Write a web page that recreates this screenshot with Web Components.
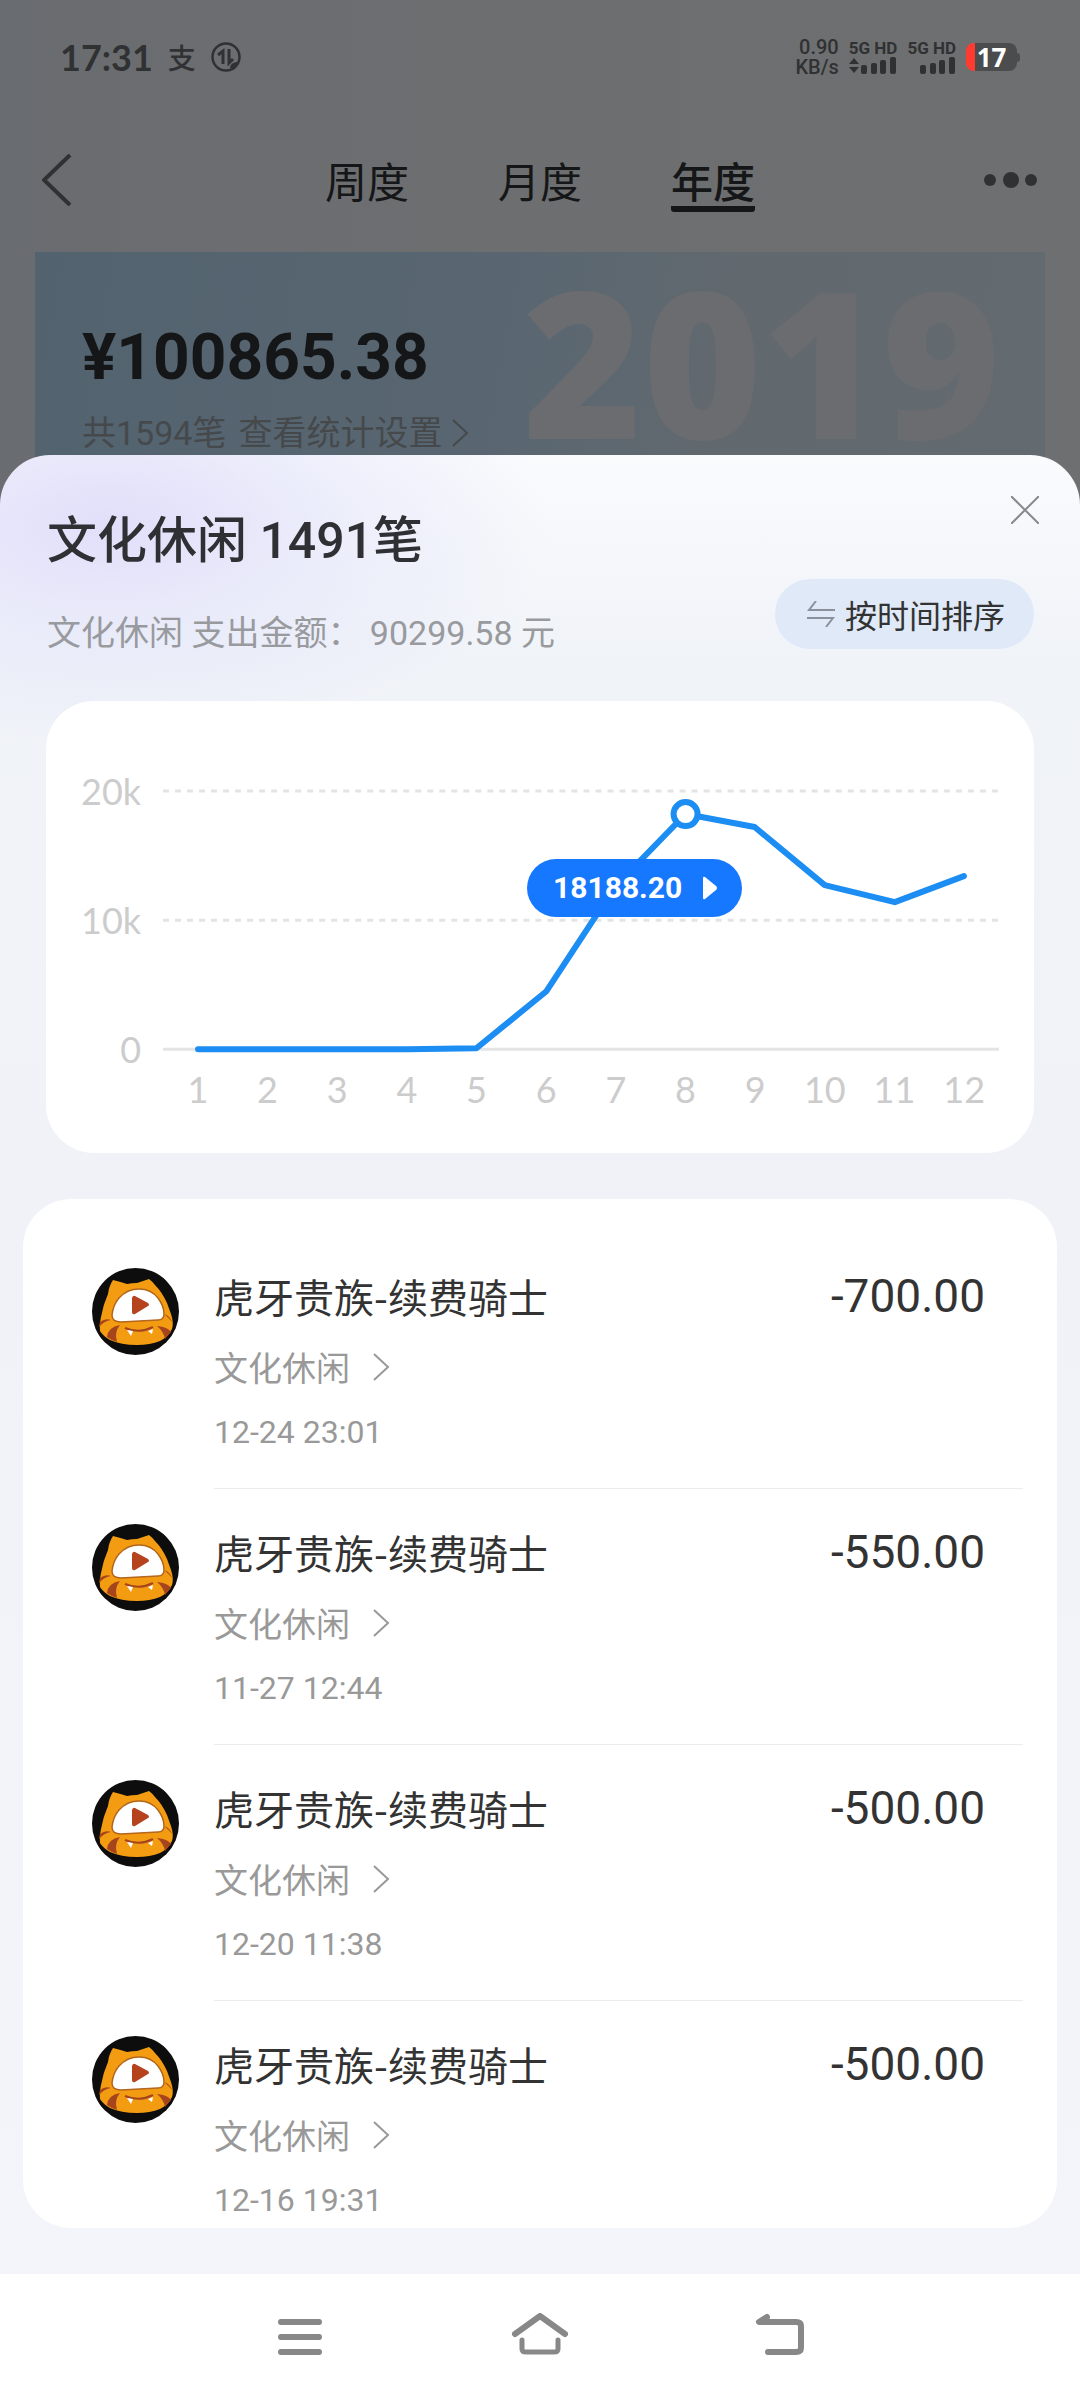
<!DOCTYPE html>
<html lang="zh-CN">
<head>
<meta charset="utf-8">
<meta name="viewport" content="width=device-width, initial-scale=1">
<title>文化休闲 年度账单</title>
<style>
  :root {
    --text: #333;
    --muted: #999;
    --faint: #ccc;
    --accent: #1677ff;
    --line: #1c8df2;
    --digits: Roboto, "Noto Sans CJK SC", sans-serif;
    --axis: Lato, "Noto Sans CJK SC", sans-serif;
  }

  body {
    margin: 0;
    font-family: "Noto Sans CJK SC", sans-serif;
    color: var(--text);
    background: #fff;
  }
</style>
</head>
<body>
<bill-app></bill-app>

<script>
const RECORDS = [
  { title: '虎牙贵族-续费骑士', category: '文化休闲', date: '12-24 23:01', amount: '-700.00' },
  { title: '虎牙贵族-续费骑士', category: '文化休闲', date: '11-27 12:44', amount: '-550.00' },
  { title: '虎牙贵族-续费骑士', category: '文化休闲', date: '12-20 11:38', amount: '-500.00' },
  { title: '虎牙贵族-续费骑士', category: '文化休闲', date: '12-16 19:31', amount: '-500.00' }
];

const MONTHS = [30, 30, 0, 30, 70, 4470, 12600, 18188.2, 17200, 12740, 11420, 13400];

const RESET = `
  * { box-sizing: border-box; }
  button {
    margin: 0;
    padding: 0;
    border: 0;
    background: none;
    color: inherit;
    font: inherit;
    cursor: pointer;
  }
  a { color: inherit; text-decoration: none; }
  svg { display: block; flex: none; }
`;

class StatusBar extends HTMLElement {
  constructor() {
    super();
    this.attachShadow({ mode: 'open' });
  }

  connectedCallback() {
    const bars = `
      <rect x="0" y="8" width="6" height="9" rx="2"/>
      <rect x="10" y="6" width="6" height="11" rx="2"/>
      <rect x="19" y="3" width="6" height="14" rx="2"/>
      <rect x="29" y="0" width="6" height="17" rx="2"/>`;

    this.shadowRoot.innerHTML = `
      <style>
        ${RESET}
        :host {
          display: flex;
          align-items: center;
          justify-content: space-between;
          height: 114px;
          padding: 0 60px;
          color: #303133;
        }
        .side { display: flex; align-items: center; }
        .left { gap: 15px; }
        .right { gap: 10px; }
        time { font: 700 36px/44px var(--axis); }
        .pay { font-size: 28px; line-height: 40px; font-weight: 500; }
        .speed { font: 500 20px/20px var(--digits); text-align: right; }
        .speed span { display: block; }
        .sim { display: flex; flex-direction: column; align-items: flex-end; gap: 1px; font: 700 17px/16px Roboto, sans-serif; }
        .sim svg { fill: currentColor; }
        .battery {
          display: flex;
          align-items: center;
          justify-content: center;
          width: 51px;
          height: 28px;
          border-radius: 8px;
          background: linear-gradient(90deg, #ff3b30 9px, #4b4c4d 9px);
          color: #fff;
          font: 700 26px/28px "Open Sans", sans-serif;
        }
        .cell { display: flex; align-items: center; }
        .cell::after { content: ''; width: 3px; height: 9px; border-radius: 0 3px 3px 0; background: #4b4c4d; }
      </style>
      <div class="side left">
        <time>17:31</time>
        <span class="pay">支</span>
        <svg width="30" height="30" viewBox="0 0 30 30" fill="none" stroke="currentColor">
          <circle cx="15" cy="15" r="13.5" stroke-width="2.5"/>
          <path d="M7 13l5-4v13M18 7v14l4-4" stroke-width="3"/>
          <path d="M19 26c0-4 4-6 8-6-1 4-4 7-8 6z" fill="currentColor" stroke="none"/>
        </svg>
      </div>
      <div class="side right">
        <div class="speed"><span>0.90</span><span>KB/s</span></div>
        <div class="sim"><span>5G HD</span>
          <svg width="48" height="17" viewBox="-12 0 48 17"><path d="M-12 7l5-6 5 6zM-12 10h10l-5 6z"/>${bars}</svg>
        </div>
        <div class="sim"><span>5G HD</span>
          <svg width="36" height="17" viewBox="0 0 36 17">${bars}</svg>
        </div>
        <div class="cell"><span class="battery">17</span></div>
      </div>
    `;
  }
}

class ReportNav extends HTMLElement {
  constructor() {
    super();
    this.attachShadow({ mode: 'open' });
  }

  connectedCallback() {
    this.shadowRoot.innerHTML = `
      <style>
        ${RESET}
        :host {
          display: grid;
          grid-template-columns: 1fr auto 1fr;
          align-items: center;
          height: 138px;
          padding: 0 42px;
          color: #151617;
        }
        nav { display: flex; gap: 89px; }
        nav button { font-size: 42px; line-height: 52px; padding-bottom: 6px; }
        nav button[aria-current] {
          font-weight: 500;
          background: linear-gradient(#151617, #151617) bottom / 100% 6px no-repeat;
          border-radius: 3px;
        }
        .back, .more { color: #303133; padding-bottom: 6px; }
        .back { justify-self: start; }
        .more { justify-self: end; }
      </style>
      <button class="back" aria-label="返回">
        <svg width="32" height="52" viewBox="2 0 32 52" fill="none" stroke="currentColor" stroke-width="4"><path d="M30 1L4 26l26 25"/></svg>
      </button>
      <nav>
        <button>周度</button>
        <button>月度</button>
        <button aria-current="page">年度</button>
      </nav>
      <button class="more" aria-label="更多">
        <svg width="54" height="16" viewBox="0 0 54 16" fill="currentColor"><circle cx="6" cy="8" r="6"/><circle cx="27" cy="8" r="8"/><circle cx="47" cy="8" r="6"/></svg>
      </button>
    `;
  }
}

class YearCard extends HTMLElement {
  constructor() {
    super();
    this.attachShadow({ mode: 'open' });
  }

  connectedCallback() {
    this.shadowRoot.innerHTML = `
      <style>
        ${RESET}
        :host {
          display: block;
          position: relative;
          height: 300px;
          margin: 0 35px;
          padding: 60px 47px 0;
          background: linear-gradient(100deg, #52636f, #596671 45%, #61696f 65%, #636a70);
        }
        .year {
          position: absolute;
          top: 8px;
          right: 44px;
          font: 800 204px/200px "Open Sans", sans-serif;
          color: #6a6c70;
        }
        .total {
          position: relative;
          margin: 0;
          font: 700 64px/92px var(--digits);
          color: #151617;
        }
        .count {
          position: relative;
          display: flex;
          align-items: center;
          gap: 12px;
          margin: 0;
          padding-top: 3px;
          font: 34px/52px var(--digits);
          color: #46494b;
        }
        .count a { display: flex; align-items: center; gap: 10px; }
      </style>
      <span class="year">${this.getAttribute('year')}</span>
      <p class="total">${this.getAttribute('total')}</p>
      <p class="count">
        <span>共1594笔</span>
        <a href="#settings">查看统计设置
          <svg width="18" height="28" viewBox="0 0 18 28" fill="none" stroke="currentColor" stroke-width="2"><path d="M1 1l14 13L1 27"/></svg>
        </a>
      </p>
    `;
  }
}

class SheetHeader extends HTMLElement {
  constructor() {
    super();
    this.attachShadow({ mode: 'open' });
  }

  connectedCallback() {
    this.shadowRoot.innerHTML = `
      <style>
        ${RESET}
        :host {
          display: flex;
          justify-content: space-between;
          padding: 0 31px 44px 47px;
        }
        .text { padding-top: 56px; }
        ::slotted(h1) { margin: 0; font: 500 50px/60px var(--digits); color: #2e3033; }
        ::slotted(p) { margin: 38px 0 0; font: 34px/48px var(--digits); color: #999a9e; white-space: pre; }
        .actions {
          display: flex;
          flex-direction: column;
          align-items: flex-end;
          gap: 45px;
          padding-top: 31px;
        }
        .close { display: grid; place-items: center; width: 48px; height: 48px; color: #88898d; }
        .sort {
          display: flex;
          align-items: center;
          gap: 10px;
          height: 70px;
          margin-right: 15px;
          padding: 0 29px 0 32px;
          border-radius: 35px;
          background: #dfe9f7;
          font-size: 32px;
          line-height: 40px;
        }
        .sort svg { color: #8b919c; }
      </style>
      <div class="text"><slot></slot></div>
      <div class="actions">
        <button class="close" aria-label="关闭">
          <svg width="28" height="28" viewBox="0 0 28 28" stroke="currentColor" stroke-width="2"><path d="M0 0l28 28M28 0L0 28"/></svg>
        </button>
        <button class="sort">
          <svg width="28" height="26" viewBox="0 0 28 26" fill="none" stroke="currentColor" stroke-width="2"><path d="M9 0L2 9h26M0 17h26l-7 9"/></svg>
          按时间排序
        </button>
      </div>
    `;
  }
}

class TrendChart extends HTMLElement {
  constructor() {
    super();
    this.attachShadow({ mode: 'open' });
    this._values = [];
  }

  set values(list) {
    this._values = list;
    this.render();
  }

  render() {
    const width = 835;
    const height = 258;
    const step = width / this._values.length;
    const points = this._values.map((value, i) => [
      Math.round(step * (i + 0.5)),
      Math.round(height - value / 20000 * height)
    ]);
    const peak = points[this._values.indexOf(Math.max(...this._values))];

    this.shadowRoot.innerHTML = `
      <style>
        ${RESET}
        :host {
          display: grid;
          grid-template-columns: auto 1fr;
          column-gap: 22px;
          margin: 0 46px;
          padding: 70px 35px 44px;
          border-radius: 48px;
          background: #fff;
          font: 36px/40px var(--axis);
          color: var(--faint);
        }
        .scale {
          display: flex;
          flex-direction: column;
          justify-content: space-between;
          align-items: flex-end;
          min-width: 60px;
        }
        .plot { position: relative; padding: 20px 0; }
        .plot svg { width: 100%; overflow: visible; }
        .months {
          grid-column: 2;
          display: grid;
          grid-template-columns: repeat(12, 1fr);
          justify-items: center;
        }
        /* value bubble of the highlighted month */
        .bubble {
          position: absolute;
          left: 364px;
          top: 88px;
          display: flex;
          align-items: center;
          gap: 20px;
          height: 58px;
          padding: 0 24px 0 26px;
          border-radius: 29px;
          background: var(--accent);
          color: #fff;
          font: 700 30px/48px var(--digits);
        }
        .plot .bubble svg { width: 16px; }
      </style>
      <div class="scale"><span>20k</span><span>10k</span><span>0</span></div>
      <div class="plot">
        <svg viewBox="0 0 ${width} ${height}" fill="none">
          <path d="M0 0h${width}M0 129h${width}" stroke="#e4e4e4" stroke-width="3" stroke-dasharray="6 6"/>
          <path d="M0 ${height}h${width}" stroke="#e4e4e4" stroke-width="3"/>
          <polyline points="${points.join(' ')}" stroke="var(--line)" stroke-width="6" stroke-linecap="round" stroke-linejoin="round"/>
          <circle cx="${peak[0]}" cy="${peak[1]}" r="12" fill="#fff" stroke="var(--line)" stroke-width="6"/>
        </svg>
        <button class="bubble">18188.20
          <svg width="16" height="24" viewBox="0 0 16 24" fill="currentColor"><path d="M1 2q0-2 2-1l11 9q2 2 0 4L3 23q-2 1-2-1z"/></svg>
        </button>
      </div>
      <div class="months">${this._values.map((_, i) => `<span>${i + 1}</span>`).join('')}</div>
    `;
  }
}

class RecordRow extends HTMLElement {
  constructor() {
    super();
    this.attachShadow({ mode: 'open' });
  }

  set record(details) {
    const { title, category, date, amount } = details;

    this.shadowRoot.innerHTML = `
      <style>
        ${RESET}
        :host { display: flex; gap: 35px; padding: 0 34px 0 69px; }
        .avatar { margin-top: 35px; }
        .body {
          flex: 1;
          display: flex;
          justify-content: space-between;
          padding: 39px 38px 35px 0;
          border-bottom: 1px solid #ececec;
        }
        .info { display: flex; flex-direction: column; align-items: flex-start; }
        h2 { margin: 0 0 27px; font-size: 40px; line-height: 48px; font-weight: 400; }
        .category { display: flex; align-items: center; gap: 22px; margin-bottom: 24px; font-size: 34px; line-height: 40px; color: var(--muted); }
        time { font: 32px/42px var(--digits); color: var(--muted); }
        data { font: 46px/48px var(--digits); }
      </style>
      <svg class="avatar" width="87" height="87" viewBox="0 0 87 87">
        <circle cx="43.5" cy="43.5" r="43.5" fill="#0d0d0d"/>
        <path d="M16 26Q17 18 21 12q8 2 14 4 5-1 10-1 6-2 12-4 4 3 6 6 7 7 12 18l4 11q3 9 1 15-4 8-12 12-10 4-23 4-16 0-27-5-7-4-10-9-1-7 1-14 2-12 7-23z" fill="#f39c12"/>
        <path d="M8 54q5-4 11-2-7 1-12 7zM15 69q1-10 13-12-6 7-3 17-6-2-10-5zM72 46q6 2 8 8-3-4-8-8zM65 58q11 1 14 6l-6 7q-1-7-8-13z" fill="#a6451d"/>
        <path d="M20 47q1-10 7-17 8-9 20-9 12 0 19 9 6 8 6 16 0 6-6 6-18 1-37 2-9 0-9-7z" fill="#fff" stroke="#b4661c" stroke-width="1.5"/>
        <path d="M40 30q1-3 3-2l13 7q2 2 0 3l-13 8q-3 1-3-2z" fill="#b5431e"/>
        <path d="M33 60q14 6 28-1" fill="none" stroke="#a6451d" stroke-width="2"/>
        <path d="M35 62l6 1-2 5zM56 63l5-2-1 5z" fill="#fff"/>
      </svg>
      <div class="body">
        <div class="info">
          <h2>${title}</h2>
          <a class="category" href="#category">${category}
            <svg width="18" height="28" viewBox="0 0 18 28" fill="none" stroke="currentColor" stroke-width="2"><path d="M2 1l14 13L2 27"/></svg>
          </a>
          <time>${date}</time>
        </div>
        <data value="${amount}">${amount}</data>
      </div>
    `;
  }
}

class RecordList extends HTMLElement {
  constructor() {
    super();
    this.attachShadow({ mode: 'open' });
    this.shadowRoot.innerHTML = `
      <style>
        :host {
          display: block;
          flex: 1;
          min-height: 0;
          margin: 46px 23px;
          padding-top: 34px;
          box-sizing: border-box;
          border-radius: 48px;
          background: #fff;
          overflow-y: auto;
          scrollbar-width: none;
        }
      </style>
      <slot></slot>
    `;
  }

  set records(list) {
    this.replaceChildren(...list.map(item => {
      const row = document.createElement('record-row');
      row.record = item;
      return row;
    }));
  }
}

class SystemNav extends HTMLElement {
  constructor() {
    super();
    this.attachShadow({ mode: 'open' });
  }

  connectedCallback() {
    this.shadowRoot.innerHTML = `
      <style>
        ${RESET}
        :host {
          display: grid;
          grid-template-columns: 3fr 4fr 4fr 4fr 3fr;
          align-items: center;
          height: 126px;
          background: #fff;
          color: #888;
        }
        button { display: grid; place-items: center; }
        button:first-of-type { grid-column: 2; }
        svg { fill: none; stroke: currentColor; stroke-width: 6; stroke-linecap: round; stroke-linejoin: round; }
      </style>
      <button aria-label="最近任务"><svg width="60" height="48" viewBox="0 0 60 48"><path d="M11 9h38M11 24h38M11 39h38"/></svg></button>
      <button aria-label="主屏幕"><svg width="60" height="48" viewBox="0 0 60 48"><path d="M5 21L30 3l25 18"/><path d="M12 27v9q0 3 4 3h28q4 0 4-3v-9" stroke-width="5"/></svg></button>
      <button aria-label="返回"><svg width="60" height="48" viewBox="0 0 60 48"><path d="M17 4L9 9h37q5 0 5 4v22q0 4-5 4H18"/></svg></button>
    `;
  }
}

class BillApp extends HTMLElement {
  constructor() {
    super();
    this.attachShadow({ mode: 'open' });
  }

  connectedCallback() {
    this.shadowRoot.innerHTML = `
      <style>
        :host {
          display: grid;
          grid-template-rows: minmax(0, 1fr) auto;
          grid-template-columns: minmax(0, 1fr);
          height: 100vh;
        }
        .report, .sheet { grid-area: 1 / 1; }
        .report { background: linear-gradient(90deg, #696c70, #6d6e70 40%, #6e6f70); }
        .sheet {
          position: relative;
          display: flex;
          flex-direction: column;
          min-height: 0;
          margin-top: 455px;
          border-radius: 50px 50px 0 0;
          background:
            radial-gradient(440px 220px at 110px 70px, #e2defa, #e4e6fa99 50%, transparent),
            linear-gradient(#fafbfd, #f0f3f8 200px, #f0f2f7 800px, #f3f5fa);
        }
      </style>
      <div class="report">
        <status-bar></status-bar>
        <report-nav></report-nav>
        <year-card year="2019" total="¥100865.38"></year-card>
      </div>
      <section class="sheet">
        <sheet-header>
          <h1>文化休闲 1491笔</h1>
          <p>文化休闲 支出金额： 90299.58 元</p>
        </sheet-header>
        <trend-chart></trend-chart>
        <record-list></record-list>
      </section>
      <system-nav></system-nav>
    `;
    this.shadowRoot.querySelector('trend-chart').values = MONTHS;
    this.shadowRoot.querySelector('record-list').records = RECORDS;
  }
}

customElements.define('status-bar', StatusBar);
customElements.define('report-nav', ReportNav);
customElements.define('year-card', YearCard);
customElements.define('sheet-header', SheetHeader);
customElements.define('trend-chart', TrendChart);
customElements.define('record-row', RecordRow);
customElements.define('record-list', RecordList);
customElements.define('system-nav', SystemNav);
customElements.define('bill-app', BillApp);
</script>
</body>
</html>
